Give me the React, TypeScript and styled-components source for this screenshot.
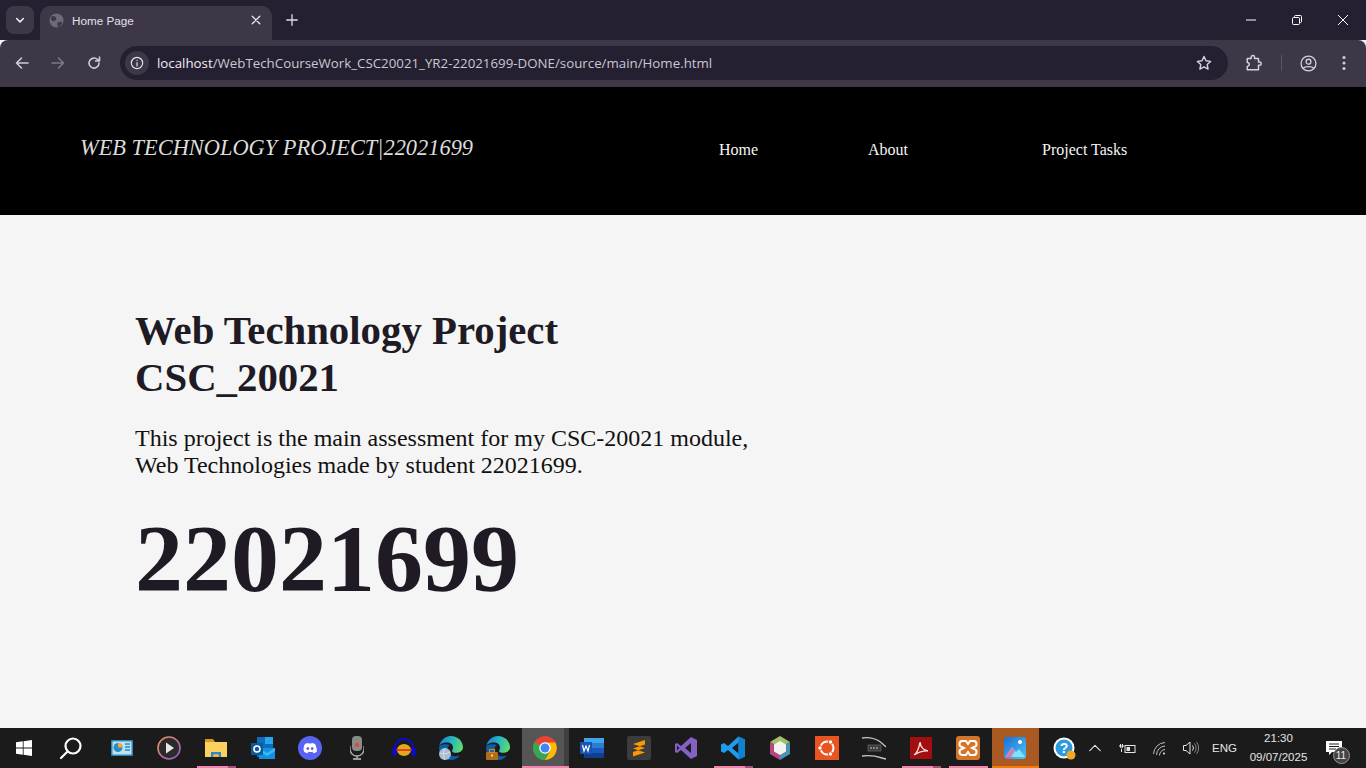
import * as React from "react"
import styled, { createGlobalStyle } from "styled-components"

const GlobalStyle = createGlobalStyle`
  html, body { margin: 0; padding: 0; height: 100%; overflow: hidden; background: #f5f5f5; }
  #root { height: 100%; }
`

const Page = styled.div`
  width: 1366px;
  height: 768px;
  display: flex;
  flex-direction: column;
  font-family: "Liberation Serif", serif;
  overflow: hidden;
`

const TabStrip = styled.div`
  height: 40px;
  background: #241f31;
  display: flex;
  align-items: flex-end;
  padding-left: 6px;
  flex: none;
`

const TabMenu = styled.div`
  width: 28px;
  height: 28px;
  margin-bottom: 6px;
  border-radius: 8px;
  background: #3d3748;
  display: flex;
  align-items: center;
  justify-content: center;
`

const Tab = styled.div`
  width: 232px;
  height: 34px;
  margin-left: 6px;
  background: #3d3748;
  border-radius: 10px 10px 0 0;
  display: flex;
  align-items: center;
  padding: 0 0 6px 9px;
  box-sizing: border-box;
  color: #e4e1ea;
  font: 11.7px "Liberation Sans", Arial, sans-serif;
`

const TabTitle = styled.span`
  margin-left: 8px;
  flex: 1;
`

const TabClose = styled.div`
  width: 16px;
  height: 16px;
  margin-right: 8px;
  display: flex;
  align-items: center;
  justify-content: center;
`

const NewTab = styled.div`
  margin: 0 0 6px 6px;
  height: 28px;
  width: 28px;
  display: flex;
  align-items: center;
  justify-content: center;
`

const WindowButtons = styled.div`
  margin-left: auto;
  height: 40px;
  display: flex;
`

const WindowButton = styled.div`
  width: 46px;
  height: 40px;
  display: flex;
  align-items: center;
  justify-content: center;
`

const Toolbar = styled.div`
  height: 47px;
  background: #3d3748;
  border-radius: 8px 8px 0 0;
  display: flex;
  align-items: center;
  padding-bottom: 1px;
  box-sizing: border-box;
  flex: none;
`

const NavIcon = styled.div`
  width: 36px;
  height: 36px;
  display: flex;
  align-items: center;
  justify-content: center;
`

const NavIcons = styled.div`
  display: flex;
  margin-left: 4px;
`

const Omnibox = styled.div`
  width: 1108px;
  height: 34px;
  margin-left: 8px;
  border-radius: 17px;
  background: #241f31;
  display: flex;
  align-items: center;
  padding: 0 5px;
  box-sizing: border-box;
`

const InfoChip = styled.div`
  width: 24px;
  height: 24px;
  border-radius: 50%;
  background: #3d3748;
  display: flex;
  align-items: center;
  justify-content: center;
`

const Url = styled.div`
  margin-left: 8px;
  font: 13.3px "Open Sans", "Liberation Sans", sans-serif;
  color: #cbc8d2;
  flex: 1;
  b { font-weight: 400; color: #f0eef3; }
`

const StarSlot = styled.div`
  margin-right: 11px;
  display: flex;
`

const ToolbarEnd = styled.div`
  display: flex;
  align-items: center;
  margin-left: 8px;
`

const Divider = styled.div`
  width: 1px;
  height: 16px;
  margin: 0 8px 0 9px;
  background: #5a5464;
`

const SiteHeader = styled.header`
  height: 128px;
  background: #000;
  display: flex;
  align-items: center;
  flex: none;
  padding-left: 80px;
  box-sizing: border-box;
`

const SiteTitle = styled.div`
  width: 639px;
  margin-top: -6px;
  font-size: 22.4px;
  font-style: italic;
  color: #dcdcdc;
  white-space: nowrap;
`

const SiteNav = styled.nav`
  display: flex;
  margin-top: -2px;
`

const SiteLink = styled.a<{ $w: number }>`
  width: ${({ $w }) => $w}px;
  font-size: 16px;
  color: #f5f5f5;
  white-space: nowrap;
`

const Main = styled.main`
  flex: 1;
  background: #f5f5f5;
  padding: 92px 0 0 135px;
  box-sizing: border-box;
  color: #201a25;
`

const Heading = styled.h1`
  margin: 0;
  width: 620px;
  font-size: 40.8px;
  line-height: 47px;
  font-weight: 700;
`

const Intro = styled.p`
  margin: 24px 0 0;
  width: 640px;
  font-size: 24px;
  line-height: 27px;
  color: #111;
`

const BigNumber = styled.div`
  margin-top: 25px;
  font-size: 96px;
  line-height: 110px;
  font-weight: 700;
`

const Taskbar = styled.footer`
  height: 40px;
  background: #1b1b1b;
  display: flex;
  flex: none;
  color: #e6e6e6;
  font-family: "Liberation Sans", Arial, sans-serif;
`

const StartSlot = styled.div`
  width: 48px;
  display: flex;
  align-items: center;
  justify-content: center;
`

const SearchSlot = styled.div`
  width: 50.5px;
  display: flex;
  align-items: center;
  justify-content: center;
  padding-right: 4px;
  box-sizing: border-box;
`

const slotBackground = { chrome: "linear-gradient(90deg, #555 calc(100% - 5px), #3f3f3f calc(100% - 5px))", photos: "#a85a22" }

const AppSlot = styled.div<{ $active?: "chrome" | "photos"; $open?: boolean; $stacked?: boolean }>`
  position: relative;
  width: 47px;
  flex: none;
  display: flex;
  align-items: center;
  justify-content: center;
  background: ${({ $active }) => ($active ? slotBackground[$active] : "transparent")};
  &::after {
    content: "";
    display: ${({ $open }) => ($open ? "block" : "none")};
    position: absolute;
    left: ${({ $active }) => ($active ? 0 : 4)}px;
    right: ${({ $active }) => ($active ? 0 : 4)}px;
    bottom: 0;
    height: 2px;
    background: ${({ $active, $stacked }) =>
      $active === "photos"
        ? "#f57c00"
        : $stacked
          ? "linear-gradient(90deg, #f283ae calc(100% - 8px), #a84f78 calc(100% - 8px))"
          : "#f283ae"};
  }
`

const Tray = styled.div`
  flex: 1;
  display: flex;
  align-items: center;
  padding-left: 14px;
`

const TrayIcon = styled.div<{ $w: number }>`
  width: ${({ $w }) => $w}px;
  height: 40px;
  display: flex;
  align-items: center;
  justify-content: center;
  flex: none;
  position: relative;
`

const Lang = styled.div`
  width: 46px;
  font-size: 11.5px;
  text-align: center;
`

const Clock = styled.div`
  width: 62px;
  font-size: 11.5px;
  line-height: 19px;
  text-align: center;
  white-space: nowrap;
`

const Bubble = styled.span`
  position: absolute;
  left: 23px;
  top: 19px;
  width: 15px;
  height: 15px;
  border-radius: 50%;
  border: 1px solid #999;
  background: #444;
  color: #eee;
  font-size: 10px;
  line-height: 15px;
  text-align: center;
`

const Stroke = ({ children, size = 16, color = "#cfcbd6", width = 1.6 }: { children: React.ReactNode; size?: number; color?: string; width?: number }) => (
  <svg width={size} height={size} viewBox="0 0 16 16" fill="none" stroke={color} strokeWidth={width} strokeLinecap="round" strokeLinejoin="round">
    {children}
  </svg>
)

const EdgeSwirl = ({ id }: { id: string }) => (
  <>
    <defs>
      <linearGradient id={id} x1="0" y1="0.3" x2="1" y2="0.5">
        <stop offset="0" stopColor="#1583d8" />
        <stop offset="0.55" stopColor="#2bb8c0" />
        <stop offset="1" stopColor="#62dc6a" />
      </linearGradient>
    </defs>
    <path d="M0 12C0 8 4 6.500 8 6.500c3.500 0 6 2 6 5 0 2-1 3-1 3.500 0 1 1.500 1.800 4 1.800 3.500 0 7-2 7-5.300C24 5 18.500 0 12 0 5.500 0 .5 5 0 12z" fill={`url(#${id})`} />
    <path d="M0 12c0 7 5.500 12 12 12 4 0 7-1.800 9-4.800-1.500.8-3 1.100-4.500 1.100-4.500 0-8-3-8-6.800 0-2 1-3.500 2.500-4.500C8 7.700 0 7.800 0 12z" fill="#0c5ea6" />
  </>
)

const icons: Record<string, React.ReactNode> = {
  tiles: (
    <svg width="22" height="16" viewBox="0 0 22 16">
      <rect width="22" height="16" rx="1" fill="#2a87b8" />
      <rect x="1.500" y="1.500" width="19" height="13" fill="#bfe3f2" />
      <circle cx="7" cy="7.500" r="4.500" fill="#2b8cc4" />
      <path d="M7 7.500V3a4.500 4.500 0 0 1 4.500 4.500z" fill="#f4a93a" />
      <path d="M14 4h5M14 7h5M14 10h5" stroke="#2b8cc4" strokeWidth="1.400" />
    </svg>
  ),
  player: (
    <svg width="24" height="24" viewBox="0 0 24 24">
      <defs>
        <linearGradient id="ring" x1="0" y1="0" x2="1" y2="1">
          <stop offset="0" stopColor="#f0935a" />
          <stop offset="1" stopColor="#8f5cc8" />
        </linearGradient>
      </defs>
      <circle cx="12" cy="12" r="11" fill="#2b2b2b" stroke="url(#ring)" strokeWidth="1.600" />
      <path d="M9 6.500l8 5.500-8 5.500z" fill="#e8e8e8" />
    </svg>
  ),
  folder: (
    <svg width="22" height="20" viewBox="0 0 22 20">
      <path d="M0 1h8l2 3h12v15H0z" fill="#d99b1c" />
      <rect y="4" width="22" height="15" fill="#fbd25e" />
      <path d="M6 19v-5h10v5h-2.500v-2.500h-5V19z" fill="#2a87d0" />
      <rect x="8.500" y="16.500" width="5" height="2.500" fill="#f2b632" />
    </svg>
  ),
  outlook: (
    <svg width="24" height="22" viewBox="0 0 24 22">
      <rect x="6" y="0" width="16" height="20" fill="#0f6cbd" />
      <rect x="14" y="0" width="8" height="7" fill="#28a8ea" />
      <path d="M8 11h16v11H8z" fill="#1490df" />
      <path d="M8 11l8 5 8-5v3l-8 5-8-5z" fill="#50d9ff" opacity=".6" />
      <rect x="0" y="6" width="12" height="12" rx="1" fill="#0a5a9e" />
      <circle cx="6" cy="12" r="3" fill="none" stroke="#fff" strokeWidth="1.600" />
    </svg>
  ),
  discord: (
    <svg width="24" height="24" viewBox="0 0 24 24">
      <circle cx="12" cy="12" r="12" fill="#5865f2" />
      <path d="M7 8c1.500-.8 3-1 3.300-1l.3.600h2.800l.3-.6c.3 0 1.800.2 3.300 1 1.400 2.300 2 5 1.800 7.700-1.200.9-2.400 1.400-3.400 1.600l-.7-1.200.9-.5-.3-.2c-1.800.8-3.900.8-5.700 0l-.3.200.9.500-.7 1.200c-1-.2-2.200-.7-3.400-1.600C5 13 5.600 10.300 7 8z" fill="#fff" />
      <ellipse cx="9.800" cy="12.500" rx="1.300" ry="1.500" fill="#5865f2" />
      <ellipse cx="14.200" cy="12.500" rx="1.300" ry="1.500" fill="#5865f2" />
    </svg>
  ),
  mic: (
    <svg width="14" height="24" viewBox="0 0 14 24">
      <rect x="2" y="0" width="10" height="15" rx="4" fill="#8a8a8a" />
      <circle cx="7" cy="9" r="2.200" fill="#d8502f" />
      <path d="M0 10v3a7 7 0 0 0 14 0v-3" fill="none" stroke="#aaa" strokeWidth="1.300" />
      <rect x="6" y="19" width="2" height="3" fill="#999" />
      <rect x="3" y="22" width="8" height="2" fill="#999" />
    </svg>
  ),
  audacity: (
    <svg width="24" height="22" viewBox="0 0 24 22">
      <path d="M3 14V11a9 9 0 0 1 18 0v3" fill="none" stroke="#0a0ae0" strokeWidth="2" />
      <rect x="0.500" y="10" width="4" height="9" rx="2" fill="#0a0ae0" />
      <rect x="19.500" y="10" width="4" height="9" rx="2" fill="#0a0ae0" />
      <ellipse cx="12" cy="13" rx="7" ry="6" fill="#e6a622" />
      <path d="M4 13h16" stroke="#d8261c" strokeWidth="1.500" />
    </svg>
  ),
  edgeGlobe: (
    <svg width="24" height="24" viewBox="0 0 24 24">
      <EdgeSwirl id="edge-a" />
      <circle cx="6" cy="18" r="6" fill="#a9bdd0" />
      <path d="M1 17c3 1 7 1 10-1M6 12c-2 4-2 8 0 12" stroke="#dfe8ef" strokeWidth=".8" fill="none" />
    </svg>
  ),
  edgeWork: (
    <svg width="24" height="24" viewBox="0 0 24 24">
      <EdgeSwirl id="edge-b" />
      <rect x="0" y="16" width="12" height="8" rx="1" fill="#b06e18" />
      <rect x="3.500" y="13.500" width="5" height="3" fill="none" stroke="#c98a2a" strokeWidth="1.200" />
      <rect x="5" y="18.500" width="2" height="2" fill="#f5d67a" />
    </svg>
  ),
  chrome: (
    <svg width="24" height="24" viewBox="0 0 24 24">
      <circle cx="12" cy="12" r="12" fill="#ea4335" />
      <path d="M12 12L1.600 6A12 12 0 0 0 12 24l5.200-9z" fill="#34a853" />
      <path d="M12 6.500h10.400A12 12 0 0 1 12 24l5.200-9z" fill="#fbbc04" />
      <circle cx="12" cy="12" r="5.800" fill="#fff" />
      <circle cx="12" cy="12" r="4.500" fill="#4285f4" />
    </svg>
  ),
  word: (
    <svg width="24" height="20" viewBox="0 0 24 20">
      <rect x="4" width="20" height="5" fill="#41a5ee" />
      <rect x="4" y="5" width="20" height="5" fill="#2b7cd3" />
      <rect x="4" y="10" width="20" height="5" fill="#185abd" />
      <rect x="4" y="15" width="20" height="5" fill="#103f91" />
      <rect x="0" y="4" width="12" height="12" rx="1" fill="#1a52b0" />
      <path d="M2.500 7l1.500 6 2-5 2 5 1.500-6" fill="none" stroke="#fff" strokeWidth="1.200" />
    </svg>
  ),
  sublime: (
    <svg width="24" height="24" viewBox="0 0 24 24">
      <rect width="24" height="24" rx="2" fill="#3c3c3c" />
      <path d="M18 4v4.500L6 12.500V8zM6 8v4.500l12 4V12zM18 12v4.500L6 20.500V16z" fill="#ff9800" />
    </svg>
  ),
  vs: (
    <svg width="24" height="24" viewBox="0 0 24 24">
      <path d="M17 1l6 3v16l-6 3L7 14l-4 3-2-1V8l2-1 4 3zM17 7l-6 5 6 5zM3 9.500v5l2.500-2.500z" fill="#8661c5" />
    </svg>
  ),
  vscode: (
    <svg width="24" height="24" viewBox="0 0 24 24">
      <path d="M17.500 0.500L24 3.500v17l-6.500 3L7 14l-4 3-3-1.500v-7L3 7l4 3zM17.500 6.500L11 12l6.500 5.500z" fill="#1f9cf0" />
      <path d="M17.500 0.500L24 3.500v17l-6.500 3z" fill="#0f7fcb" opacity=".9" />
    </svg>
  ),
  netbeans: (
    <svg width="22" height="24" viewBox="0 0 22 24">
      <path d="M11 0l10 6-10 6L1 6z" fill="#a3c16b" />
      <path d="M1 6l10 6v12L1 18z" fill="#b5487f" />
      <path d="M21 6L11 12v12l10-6z" fill="#4a93b8" />
      <path d="M11 5l6 3.500v7L11 19l-6-3.500v-7z" fill="#f2f2ee" />
    </svg>
  ),
  ubuntu: (
    <svg width="24" height="24" viewBox="0 0 24 24">
      <rect width="24" height="24" fill="#e95420" />
      <circle cx="12" cy="12" r="6.500" fill="none" stroke="#fff" strokeWidth="2" />
      <circle cx="5" cy="12" r="2.200" fill="#fff" stroke="#e95420" />
      <circle cx="15.500" cy="6" r="2.200" fill="#fff" stroke="#e95420" />
      <circle cx="15.500" cy="18" r="2.200" fill="#fff" stroke="#e95420" />
    </svg>
  ),
  kali: (
    <svg width="24" height="24" viewBox="0 0 24 24">
      <path d="M0 2c6-1 12 0 17 3 3 2 5 4 7 6M0 20c8-1 14 0 20 2l4 1" fill="none" stroke="#c4c4c4" strokeWidth="1.400" />
      <rect x="6" y="9" width="13" height="6" fill="#3a3a3a" stroke="#777" strokeWidth=".6" />
      <path d="M8 12h9" stroke="#ccc" strokeWidth="1.200" strokeDasharray="2 1" />
    </svg>
  ),
  acrobat: (
    <svg width="22" height="22" viewBox="0 0 22 22">
      <rect width="22" height="22" rx="1" fill="#a30f0f" />
      <path d="M4 18c3-2 5-7 6-13 .5 5 3 8 8 9-5-.5-9 1-14 4z" fill="none" stroke="#f4e0e0" strokeWidth="1.400" />
    </svg>
  ),
  xampp: (
    <svg width="24" height="24" viewBox="0 0 24 24">
      <rect width="24" height="24" rx="3" fill="#d4752a" />
      <path d="M7 5h3l2 3 2-3h3a3 3 0 0 1 1 6l-2 1 2 1a3 3 0 0 1-1 6h-3l-2-3-2 3H7a3 3 0 0 1-1-6l2-1-2-1a3 3 0 0 1 1-6z" fill="none" stroke="#fff" strokeWidth="2" />
    </svg>
  ),
  photos: (
    <svg width="22" height="22" viewBox="0 0 22 22">
      <defs>
        <linearGradient id="sky" x1="0" y1="0" x2="1" y2="1">
          <stop offset="0" stopColor="#1a6fd8" />
          <stop offset="1" stopColor="#4fc3f7" />
        </linearGradient>
      </defs>
      <rect width="22" height="22" rx="3" fill="url(#sky)" />
      <circle cx="16" cy="5" r="2" fill="#fff" />
      <path d="M1 20l7-10 4 5 3-3 6 8z" fill="#7fe3f7" />
      <path d="M1 20l7-10 3 4-5 8H3z" fill="#e85a9a" opacity=".7" />
    </svg>
  ),
}

const apps: { name: string; open?: boolean; stacked?: boolean; active?: "chrome" | "photos" }[] = [
  { name: "tiles" },
  { name: "player" },
  { name: "folder", open: true, stacked: true },
  { name: "outlook" },
  { name: "discord" },
  { name: "mic" },
  { name: "audacity" },
  { name: "edgeGlobe" },
  { name: "edgeWork" },
  { name: "chrome", open: true, active: "chrome" },
  { name: "word" },
  { name: "sublime" },
  { name: "vs" },
  { name: "vscode", open: true, stacked: true },
  { name: "netbeans" },
  { name: "ubuntu" },
  { name: "kali" },
  { name: "acrobat", open: true, stacked: true },
  { name: "xampp", open: true },
  { name: "photos", open: true, active: "photos" },
]

export default function App() {
  return (
    <Page>
      <GlobalStyle />
      <TabStrip>
        <TabMenu>
          <Stroke size={12} color="#f0eef3" width={2}><path d="M3.500 6l4.500 4.500L12.500 6" /></Stroke>
        </TabMenu>
        <Tab>
          <svg width="15" height="15" viewBox="0 0 16 16">
            <circle cx="8" cy="8" r="7.500" fill="#6f6a78" />
            <path d="M3 3l4 1 1 3-3 2-3-2zM9 10l4-1 1 2-3 4-2-1z" fill="#3d3748" />
          </svg>
          <TabTitle>Home Page</TabTitle>
          <TabClose>
            <Stroke size={12} color="#e8e5ee" width={1.800}><path d="M3 3l10 10M13 3L3 13" /></Stroke>
          </TabClose>
        </Tab>
        <NewTab>
          <Stroke size={14} color="#dedbe4" width={1.500}><path d="M8 2v12M2 8h12" /></Stroke>
        </NewTab>
        <WindowButtons>
          <WindowButton>
            <svg width="10" height="10" viewBox="0 0 10 10"><path d="M0 5h10" stroke="#fff" /></svg>
          </WindowButton>
          <WindowButton>
            <svg width="10" height="10" viewBox="0 0 10 10" fill="none" stroke="#fff"><rect x=".5" y="2.500" width="7" height="7" rx="1" /><path d="M2.500 2.500V1.500a1 1 0 0 1 1-1h5a1 1 0 0 1 1 1v5a1 1 0 0 1-1 1h-1" /></svg>
          </WindowButton>
          <WindowButton>
            <svg width="10" height="10" viewBox="0 0 10 10"><path d="M0 0l10 10M10 0L0 10" stroke="#fff" /></svg>
          </WindowButton>
        </WindowButtons>
      </TabStrip>
      <Toolbar>
        <NavIcons>
          <NavIcon>
            <Stroke><path d="M14 8H2.500M7.500 3L2.500 8l5 5" /></Stroke>
          </NavIcon>
          <NavIcon>
            <Stroke color="#7d7886"><path d="M2 8h11.500M8.500 3l5 5-5 5" /></Stroke>
          </NavIcon>
          <NavIcon>
            <Stroke><path d="M13 8a5 5 0 1 1-1.500-3.500L13.500 6M13.500 2v4h-4" /></Stroke>
          </NavIcon>
        </NavIcons>
        <Omnibox>
          <InfoChip>
            <Stroke size={14} color="#e6e3ec" width={1.300}><circle cx="8" cy="8" r="6.500" /><path d="M8 7.500V11.500M8 4.800v.2" /></Stroke>
          </InfoChip>
          <Url><b>localhost</b>/WebTechCourseWork_CSC20021_YR2-22021699-DONE/source/main/Home.html</Url>
          <StarSlot>
            <Stroke size={16} color="#d6d2dc" width={1.400}><path d="M8 1.500l2 4.300 4.600.6-3.400 3.100.9 4.600L8 11.800l-4.100 2.300.9-4.600L1.400 6.400 6 5.800z" /></Stroke>
          </StarSlot>
        </Omnibox>
        <ToolbarEnd>
          <NavIcon>
            <Stroke size={18} color="#d6d2dc" width={1.300}><path d="M2 4h3.500V2.800a1.400 1.400 0 0 1 3 0V4H12v3.200h1a1.400 1.400 0 0 1 0 2.800h-1v4H2v-3a1.700 1.700 0 0 0 0-3.500z" /></Stroke>
          </NavIcon>
          <Divider />
          <NavIcon>
            <Stroke size={17} color="#d6d2dc" width={1.200}><circle cx="8" cy="8" r="7" /><circle cx="8" cy="6.300" r="2.300" /><path d="M3.300 12.500C4.500 10.500 11.500 10.500 12.700 12.500" /></Stroke>
          </NavIcon>
          <NavIcon>
            <svg width="4" height="16" viewBox="0 0 4 16" fill="#d6d2dc"><circle cx="2" cy="2.500" r="1.500" /><circle cx="2" cy="8" r="1.500" /><circle cx="2" cy="13.500" r="1.500" /></svg>
          </NavIcon>
        </ToolbarEnd>
      </Toolbar>
      <SiteHeader>
        <SiteTitle>WEB TECHNOLOGY PROJECT|22021699</SiteTitle>
        <SiteNav>
          <SiteLink $w={149}>Home</SiteLink>
          <SiteLink $w={174}>About</SiteLink>
          <SiteLink $w={100}>Project Tasks</SiteLink>
        </SiteNav>
      </SiteHeader>
      <Main>
        <Heading>Web Technology Project CSC_20021</Heading>
        <Intro>This project is the main assessment for my CSC-20021 module, Web Technologies made by student 22021699.</Intro>
        <BigNumber>22021699</BigNumber>
      </Main>
      <Taskbar>
        <StartSlot>
          <svg width="16" height="16" viewBox="0 0 16 16" fill="#fff"><path d="M0 2.300L6.800 1.300V7.600H0zM7.600 1.200L16 0V7.600H7.600zM0 8.400H6.800V14.700L0 13.700zM7.600 8.400H16V16L7.600 14.800z" /></svg>
        </StartSlot>
        <SearchSlot>
          <svg width="24" height="24" viewBox="0 0 24 24" fill="none" stroke="#fff" strokeWidth="2.200" strokeLinecap="round"><circle cx="14" cy="10" r="7.500" /><path d="M8.500 15.500L2 22" /></svg>
        </SearchSlot>
        {apps.map(app => (
          <AppSlot key={app.name} $active={app.active} $open={app.open} $stacked={app.stacked}>
            {icons[app.name]}
          </AppSlot>
        ))}
        <Tray>
          <TrayIcon $w={24}>
            <svg width="23" height="23" viewBox="0 0 23 23">
              <circle cx="11" cy="11" r="10.500" fill="#fff" />
              <circle cx="11" cy="11" r="8.500" fill="#2b9be0" />
              <circle cx="18" cy="18" r="4.500" fill="#f5a623" />
              <text x="11" y="16" textAnchor="middle" fontFamily="Liberation Sans" fontWeight="700" fontSize="14" fill="#fff">?</text>
            </svg>
          </TrayIcon>
          <TrayIcon $w={37}>
            <Stroke size={14} color="#e6e6e6" width={1.200}><path d="M2 11l6-6 6 6" /></Stroke>
          </TrayIcon>
          <TrayIcon $w={28}>
            <svg width="17" height="11" viewBox="0 0 17 11" fill="none" stroke="#e6e6e6"><rect x="6" y="2.500" width="10" height="7" /><rect x="7.500" y="4" width="3.500" height="4" fill="#e6e6e6" stroke="none" /><path d="M0 3h5M1.500 1v3.500a1.500 1.500 0 0 0 2 0V1M2.500 6v3" /></svg>
          </TrayIcon>
          <TrayIcon $w={38}>
            <svg width="15" height="15" viewBox="0 0 15 15" fill="none" stroke="#bdbdbd"><path d="M.5 13A12 12 0 0 1 12 1.500M3.500 14A9 9 0 0 1 12 5M6.500 14.500A6 6 0 0 1 12 8.500" /><circle cx="11" cy="12.500" r="1" fill="#eee" stroke="none" /></svg>
          </TrayIcon>
          <TrayIcon $w={22}>
            <svg width="16" height="14" viewBox="0 0 16 14" fill="none" stroke="#e6e6e6"><path d="M.5 4.500h2.500L7 1v12L3 9.500H.5zM9.500 4.500a4 4 0 0 1 0 5" /><path d="M11.500 2.500a7 7 0 0 1 0 9M13.500 1a9.500 9.500 0 0 1 0 12" stroke="#888" /></svg>
          </TrayIcon>
          <Lang>ENG</Lang>
          <Clock>21:30<br />09/07/2025</Clock>
          <TrayIcon $w={48}>
            <svg width="16" height="14" viewBox="0 0 16 14"><path d="M0 0h16v11H6l-3 3v-3H0z" fill="#fff" /><path d="M3 3h10M3 5.500h10M3 8h7" stroke="#222" /></svg>
            <Bubble>11</Bubble>
          </TrayIcon>
        </Tray>
      </Taskbar>
    </Page>
  )
}
